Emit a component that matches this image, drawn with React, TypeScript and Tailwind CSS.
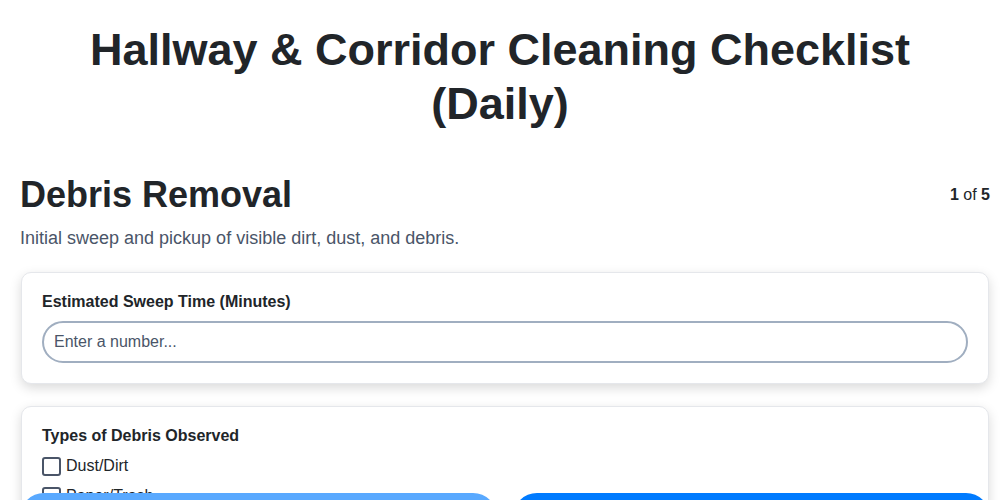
import { useState } from 'react';

const debrisTypes = ['Dust/Dirt', 'Paper/Trash', 'Food Waste', 'Leaves/Outdoor Debris', 'Other'];

export default function App() {
  const [checked, setChecked] = useState<Record<string, boolean>>({});

  return (
    <div className="relative h-[500px] overflow-hidden bg-white font-['Liberation_Sans',Arial,sans-serif] text-[#212529]">
      <h1 className="px-5 pt-[23px] text-center text-[45px] font-bold leading-[54px]">
        Hallway &amp; Corridor Cleaning Checklist
        <br />
        (Daily)
      </h1>

      <div className="pl-5 pr-[10px]">
        <div className="mt-[42px] flex items-center justify-between">
          <h2 className="text-4xl font-bold leading-[1.2]">Debris Removal</h2>
          <div className="text-base">
            <span className="font-bold">1</span> of <span className="font-bold">5</span>
          </div>
        </div>
        <p className="mt-[9px] text-lg leading-[27px] text-[#4a5568]">
          Initial sweep and pickup of visible dirt, dust, and debris.
        </p>

        {/* numeric field */}
        <div className="mx-px mt-5 rounded-[10px] border border-[#e5e7eb] bg-white px-5 pb-5 pt-[17px] shadow-[0_4px_12px_rgba(0,0,0,0.15)]">
          <label className="mb-[7px] block text-base font-bold leading-6">Estimated Sweep Time (Minutes)</label>
          <input
            type="number"
            placeholder="Enter a number..."
            className="block h-[42px] w-full rounded-full border-2 border-[#a0aec0] px-[10px] text-base text-[#212529] outline-none placeholder:text-[#4a5568]"
          />
        </div>

        {/* checkbox group */}
        <div className="mx-px mt-[22px] rounded-[10px] border border-[#e5e7eb] bg-white px-5 pb-5 pt-[17px] shadow-[0_4px_12px_rgba(0,0,0,0.15)]">
          <div className="mb-[6px] text-base font-bold leading-6">Types of Debris Observed</div>
          <div className="flex flex-col gap-[6px]">
            {debrisTypes.map((t) => (
              <label key={t} className="flex h-6 items-center gap-[5px] text-base">
                <span
                  onClick={() => setChecked({ ...checked, [t]: !checked[t] })}
                  className="h-[19px] w-[19px] rounded-[3px] border-2 border-[#4a5568] bg-white"
                />
                {t}
              </label>
            ))}
          </div>
        </div>
      </div>

      {/* nav bar, sits over the content */}
      <div className="absolute left-0 right-0 top-[493px] flex gap-4 pl-5 pr-[10px]">
        <button type="button" disabled className="h-12 flex-1 rounded-full bg-[#59a9ff] text-base font-bold text-white">
          Previous
        </button>
        <button type="button" className="h-12 flex-1 rounded-full bg-[#007bff] text-base font-bold text-white">
          Next
        </button>
      </div>
    </div>
  );
}
